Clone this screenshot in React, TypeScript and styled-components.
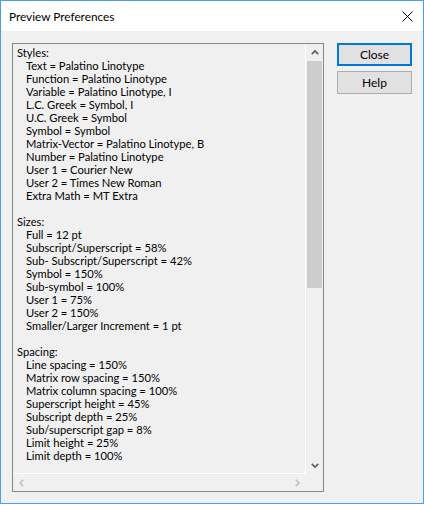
import React from "react";
import styled, { createGlobalStyle } from "styled-components";

const GlobalStyle = createGlobalStyle`
  html, body {
    margin: 0;
    padding: 0;
    background: #ffffff;
  }
  body {
    font-family: Lato, "Noto Sans", sans-serif;
    font-size: 12px;
    color: #000000;
  }
`;

const Window = styled.div`
  width: 424px;
  height: 504px;
  box-sizing: border-box;
  border: 1px solid #4ca0ec;
  display: flex;
  flex-direction: column;
  background: #f0f0f0;
`;

const TitleBar = styled.div`
  height: 30px;
  flex: none;
  background: #ffffff;
  display: flex;
  align-items: center;
  justify-content: space-between;
  padding: 0 9px 0 8px;
`;

const Title = styled.span`
  font-size: 11.8px;
  color: #000000;
`;

const CloseGlyph = styled.span`
  width: 11px;
  height: 11px;
  display: flex;
  margin-right: 1px;
`;

const Body = styled.div`
  flex: 1;
  display: flex;
  align-items: flex-start;
  gap: 13px;
  padding: 12px 11px 11px 11px;
`;

const ListBox = styled.div`
  width: 312px;
  height: 449px;
  box-sizing: border-box;
  border: 1px solid #828790;
  display: grid;
  grid-template-columns: 1fr 17px;
  grid-template-rows: 1fr 17px;
`;

const Content = styled.div`
  border-right: 1px solid #ffffff;
  border-bottom: 1px solid #ffffff;
  overflow: hidden;
  padding: 2px 0 0 4px;
`;

const Line = styled.div<{ $indent?: boolean }>`
  height: 13px;
  line-height: 13px;
  font-size: 11.2px;
  white-space: nowrap;
  padding-left: ${(p) => (p.$indent ? "9px" : "0")};
`;

const VScroll = styled.div`
  display: flex;
  flex-direction: column;
`;

const HScroll = styled.div`
  display: flex;
`;

const ArrowButton = styled.div`
  width: 17px;
  height: 17px;
  flex: none;
  display: flex;
  align-items: center;
  justify-content: center;
`;

const Track = styled.div`
  flex: 1;
  padding: 0 1px;
`;

const Thumb = styled.div`
  height: 227px;
  background: #cdcdcd;
`;

const Corner = styled.div``;

const Buttons = styled.div`
  display: flex;
  flex-direction: column;
  gap: 5px;
`;

const Button = styled.div<{ $default?: boolean }>`
  width: 75px;
  height: 23px;
  box-sizing: border-box;
  background: #e1e1e1;
  border: ${(p) => (p.$default ? "2px solid #0078d7" : "1px solid #adadad")};
  display: flex;
  align-items: center;
  justify-content: center;
  font-size: 12px;
  color: #000000;
`;

type Entry = { text: string; indent?: boolean };

const lines: Entry[] = [
  { text: "Styles:" },
  { text: "Text = Palatino Linotype", indent: true },
  { text: "Function = Palatino Linotype", indent: true },
  { text: "Variable = Palatino Linotype, I", indent: true },
  { text: "L.C. Greek = Symbol, I", indent: true },
  { text: "U.C. Greek = Symbol", indent: true },
  { text: "Symbol = Symbol", indent: true },
  { text: "Matrix-Vector = Palatino Linotype, B", indent: true },
  { text: "Number = Palatino Linotype", indent: true },
  { text: "User 1 = Courier New", indent: true },
  { text: "User 2 = Times New Roman", indent: true },
  { text: "Extra Math = MT Extra", indent: true },
  { text: "" },
  { text: "Sizes:" },
  { text: "Full = 12 pt", indent: true },
  { text: "Subscript/Superscript = 58%", indent: true },
  { text: "Sub- Subscript/Superscript = 42%", indent: true },
  { text: "Symbol = 150%", indent: true },
  { text: "Sub-symbol = 100%", indent: true },
  { text: "User 1 = 75%", indent: true },
  { text: "User 2 = 150%", indent: true },
  { text: "Smaller/Larger Increment = 1 pt", indent: true },
  { text: "" },
  { text: "Spacing:" },
  { text: "Line spacing = 150%", indent: true },
  { text: "Matrix row spacing = 150%", indent: true },
  { text: "Matrix column spacing = 100%", indent: true },
  { text: "Superscript height = 45%", indent: true },
  { text: "Subscript depth = 25%", indent: true },
  { text: "Sub/superscript gap = 8%", indent: true },
  { text: "Limit height = 25%", indent: true },
  { text: "Limit depth = 100%", indent: true },
];

function Chevron({ dir, color }: { dir: "up" | "down" | "left" | "right"; color: string }) {
  const d = {
    up: "M0.8 5.2 L4 2 L7.2 5.2",
    down: "M0.8 1.8 L4 5 L7.2 1.8",
    left: "M5.2 0.8 L2 4 L5.2 7.2",
    right: "M1.8 0.8 L5 4 L1.8 7.2",
  }[dir];
  const horizontal = dir === "left" || dir === "right";
  return (
    <svg
      width={horizontal ? 7 : 8}
      height={horizontal ? 8 : 7}
      viewBox={horizontal ? "0 0 7 8" : "0 0 8 7"}
    >
      <path d={d} fill="none" stroke={color} strokeWidth="1.7" />
    </svg>
  );
}

export default function App() {
  return (
    <>
      <GlobalStyle />
      <Window>
        <TitleBar>
          <Title>Preview Preferences</Title>
          <CloseGlyph>
            <svg width="11" height="11" viewBox="0 0 11 11">
              <path d="M0.5 0.5 L10.5 10.5 M10.5 0.5 L0.5 10.5" stroke="#000" strokeWidth="1" />
            </svg>
          </CloseGlyph>
        </TitleBar>
        <Body>
          <ListBox>
            <Content>
              {lines.map((l, i) => (
                <Line key={i} $indent={l.indent}>
                  {l.text}
                </Line>
              ))}
            </Content>
            <VScroll>
              <ArrowButton>
                <Chevron dir="up" color="#606060" />
              </ArrowButton>
              <Track>
                <Thumb />
              </Track>
              <ArrowButton>
                <Chevron dir="down" color="#606060" />
              </ArrowButton>
            </VScroll>
            <HScroll>
              <ArrowButton>
                <Chevron dir="left" color="#c2c2c2" />
              </ArrowButton>
              <Track />
              <ArrowButton>
                <Chevron dir="right" color="#c2c2c2" />
              </ArrowButton>
            </HScroll>
            <Corner />
          </ListBox>
          <Buttons>
            <Button $default>Close</Button>
            <Button>Help</Button>
          </Buttons>
        </Body>
      </Window>
    </>
  );
}
